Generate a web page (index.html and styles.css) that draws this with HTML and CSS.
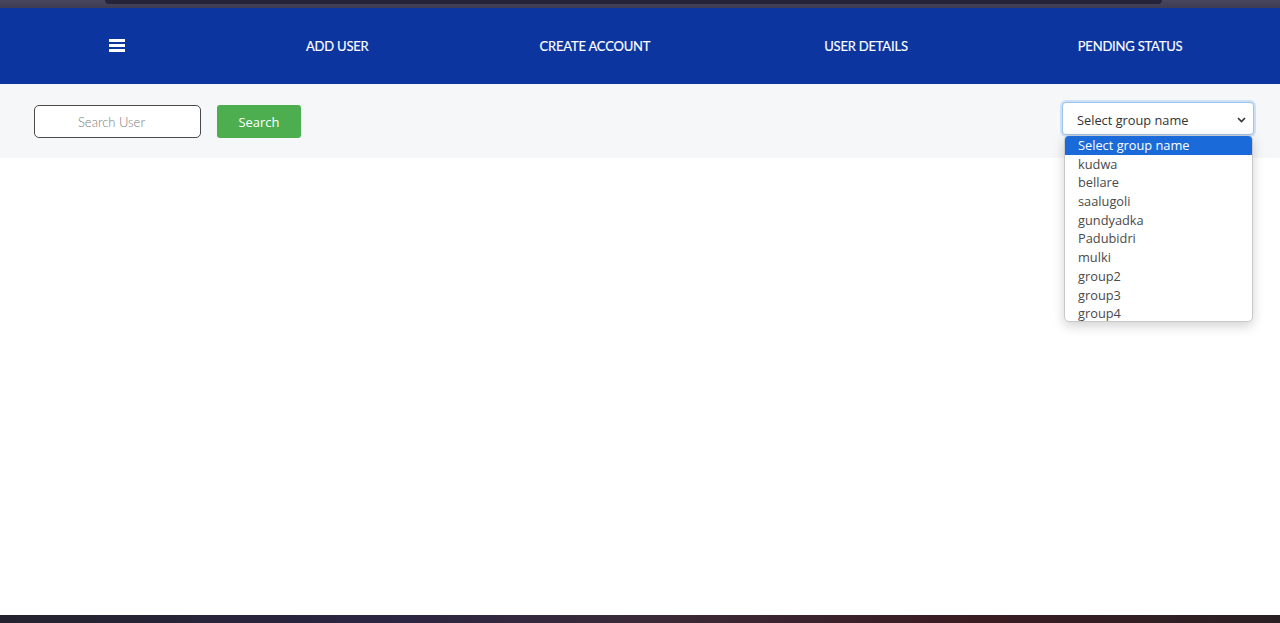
FILE: index.html
```html
<!DOCTYPE html>
<html lang="en">
<head>
<meta charset="utf-8">
<title>Users</title>
<link rel="stylesheet" href="styles.css">
</head>
<body>
<div class="page">
  <div class="chrome"><div class="chrome-pill"></div></div>
  <nav class="nav">
    <button class="burger" aria-label="menu">
      <svg width="16" height="13" viewBox="0 0 16 13"><rect x="0" y="0" width="16" height="3" fill="#fff"/><rect x="0" y="5" width="16" height="3" fill="#fff"/><rect x="0" y="10" width="16" height="3" fill="#fff"/></svg>
    </button>
    <a class="nav-link" href="#">ADD USER</a>
    <a class="nav-link" href="#">CREATE ACCOUNT</a>
    <a class="nav-link nav-link-details" href="#">USER DETAILS</a>
    <a class="nav-link nav-link-pending" href="#">PENDING STATUS</a>
  </nav>
  <div class="toolbar">
    <div class="search">
      <input class="search-input" type="text" placeholder="Search User">
      <button class="search-btn">Search</button>
    </div>
    <div class="group-select">
      <div class="select-box">
        <span>Select group name</span>
        <svg width="9" height="6" viewBox="0 0 9 6"><path d="M1 1l3.5 3.5L8 1" fill="none" stroke="#333" stroke-width="1.6"/></svg>
      </div>
      <ul class="options">
        <li class="opt active">Select group name</li>
        <li class="opt">kudwa</li>
        <li class="opt">bellare</li>
        <li class="opt">saalugoli</li>
        <li class="opt">gundyadka</li>
        <li class="opt">Padubidri</li>
        <li class="opt">mulki</li>
        <li class="opt">group2</li>
        <li class="opt">group3</li>
        <li class="opt">group4</li>
      </ul>
    </div>
  </div>
  <main class="content"></main>
  <div class="taskbar"></div>
</div>
</body>
</html>
```
FILE: styles.css
```css
* { box-sizing: border-box; }
html, body { margin: 0; padding: 0; }
body { font-family: "Lato", "Open Sans", sans-serif; background: #fff; }
.page { display: flex; flex-direction: column; height: 623px; overflow: hidden; }
.chrome { height: 8px; background: linear-gradient(#48455d, #3e3b55); padding: 0 118px 0 105px; }
.chrome-pill { height: 4px; background: #25233a; border-radius: 0 0 6px 6px; }
.nav { height: 76px; background: #0c35a0; display: flex; align-items: center; padding-left: 109px; }
.burger { background: none; border: 0; padding: 0; width: 16px; height: 13px; display: flex; margin-top: -1px; margin-right: 181px; }
.nav-link { color: #fff; text-decoration: none; font-size: 13px; font-weight: 400; letter-spacing: -0.2px; margin-top: -1px; -webkit-text-stroke: 0.15px #fff; }
.nav-link + .nav-link { margin-left: 171px; }
.nav-link-details { margin-left: 174px !important; }
.nav-link-pending { margin-left: 170px !important; }
.toolbar { position: relative; height: 74px; background: #f5f7f9; display: flex; justify-content: space-between; align-items: flex-start; padding: 21px 26px 0 34px; }
.search { display: flex; gap: 16px; }
.search-input { width: 167px; height: 33px; border: 1px solid #4a4a4a; border-radius: 5px; background: #fff; font-family: "Lato", sans-serif; font-weight: 300; font-size: 13px; text-align: center; color: #333; outline: none; padding: 0 12px 0 0; }
.search-input::placeholder { color: #7e7e7e; }
.search-btn { width: 84px; height: 33px; border: 0; border-radius: 3px; background: #4cae4f; color: #fff; font-family: "Open Sans", sans-serif; font-size: 13px; }
.group-select { position: relative; margin-top: -3px; }
.select-box { width: 192px; height: 33px; border: 1px solid #9cc3ee; border-radius: 4px; background: #fff; box-shadow: 0 0 0 2px #cfe0f5; display: flex; align-items: center; justify-content: space-between; padding: 2px 7px 0 14px; font-family: "Open Sans", sans-serif; font-size: 12.8px; color: #333; }
.options { position: absolute; top: 33px; left: 2px; width: 189px; height: 187px; margin: 0; padding: 0; list-style: none; background: #fff; border: 1px solid #c9c9c9; border-radius: 5px; box-shadow: 0 4px 12px rgba(0,0,0,0.18); overflow: hidden; font-family: "Open Sans", sans-serif; font-size: 12.8px; color: #4a4a4a; }
.opt { height: 18.7px; line-height: 18.7px; padding-left: 13px; }
.opt.active { background: #1a6ad9; color: #fff; }
.content { flex: 1; background: #fff; }
.taskbar { height: 8px; background: linear-gradient(90deg, #24222e 0%, #2b2542 30%, #3a2a38 50%, #3a1c22 75%, #2a2024 100%); }
```
